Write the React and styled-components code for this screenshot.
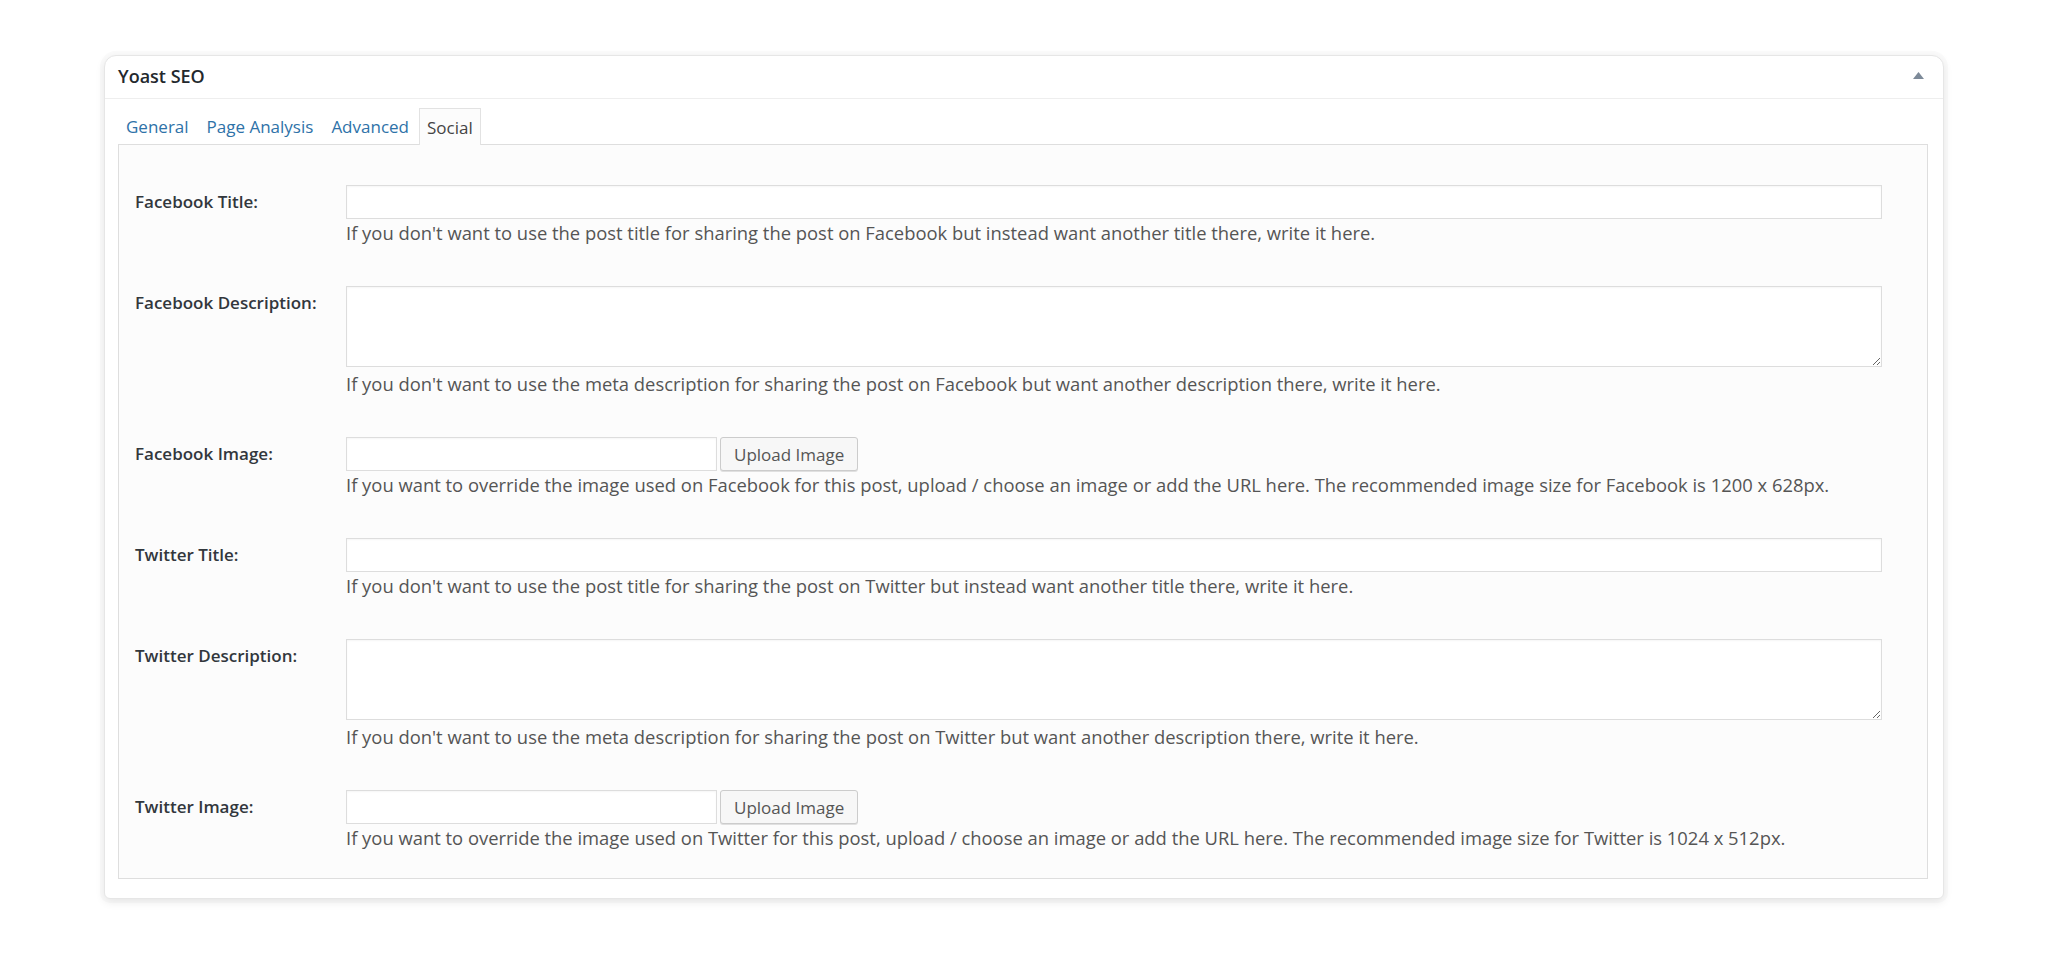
import React from "react";
import styled, { createGlobalStyle } from "styled-components";

const GlobalStyle = createGlobalStyle`
  html, body {
    margin: 0;
    padding: 0;
    background: #ffffff;
  }
  body {
    font-family: "Open Sans", "Noto Sans", sans-serif;
    color: #444;
  }
`;

const Page = styled.div`
  padding: 55px 104px 56px 104px;
  width: 1840px;
`;

const PostBox = styled.div`
  background: #fff;
  border: 1px solid #e6e6e6;
  border-radius: 12px 12px 6px 6px;
  box-shadow: 0 3px 10px rgba(0, 0, 0, 0.09), 0 0 0 4px #fbfbfb;
  overflow: hidden;
`;

const BoxHeader = styled.div`
  box-sizing: border-box;
  height: 43px;
  display: flex;
  align-items: center;
  justify-content: space-between;
  padding: 0 18px 3px 13px;
  border-bottom: 1px solid #eeeeee;
`;

const BoxTitle = styled.h2`
  margin: 0;
  font-size: 18px;
  font-weight: 600;
  color: #23282d;
`;

const Toggle = styled.button`
  border: 0;
  background: none;
  padding: 0;
  width: 14px;
  height: 14px;
  display: flex;
  align-items: center;
  justify-content: center;
  cursor: pointer;
  svg {
    display: block;
  }
`;

const Inside = styled.div`
  padding: 9px 15px 19px 13px;
`;

const TabList = styled.ul`
  list-style: none;
  margin: 0;
  padding: 0;
  display: flex;
  align-items: flex-end;
  height: 36px;
`;

const Tab = styled.li`
  margin-right: 2px;
  padding: 3px 7px 0;
  height: 33px;
  line-height: 32px;
  font-size: 17px;
  color: ${(p) => (p.$active ? "#444" : "#2e72a8")};
  background: ${(p) => (p.$active ? "#fcfcfc" : "transparent")};
  border: 1px solid ${(p) => (p.$active ? "#e2e2e2" : "transparent")};
  border-bottom: 0;
  margin-bottom: ${(p) => (p.$active ? "-1px" : "0")};
  position: relative;
  cursor: pointer;
`;

const Panel = styled.div`
  background: #fcfcfc;
  border: 1px solid #dedede;
  padding: 40px 45px 29px 16px;
`;

const Form = styled.div`
  display: grid;
  grid-template-columns: 211px 1fr;
  row-gap: 42px;
`;

const Label = styled.label`
  font-size: 17px;
  font-weight: 600;
  color: #32373c;
  line-height: 34px;
  align-self: start;
`;

const Field = styled.div`
  display: flex;
  flex-direction: column;
`;

const TextInput = styled.input`
  box-sizing: border-box;
  width: ${(p) => p.$width || "100%"};
  height: 34px;
  border: 1px solid #dddddd;
  background: #fff;
  box-shadow: inset 0 1px 2px rgba(0, 0, 0, 0.04);
  margin: 0;
  padding: 3px 6px;
  font: inherit;
  font-size: 17px;
`;

const TextArea = styled.textarea`
  box-sizing: border-box;
  display: block;
  width: 100%;
  height: 81px;
  border: 1px solid #dddddd;
  background: #fff;
  box-shadow: inset 0 1px 2px rgba(0, 0, 0, 0.04);
  margin: 0;
  padding: 4px 6px;
  font: inherit;
  font-size: 17px;
  resize: vertical;
`;

const UploadRow = styled.div`
  display: flex;
  align-items: center;
  gap: 3px;
`;

const Button = styled.button`
  box-sizing: border-box;
  height: 34px;
  padding: 0 13px;
  border: 1px solid #cccccc;
  border-radius: 3px;
  background: #f7f7f7;
  box-shadow: 0 1px 0 #e0e0e0;
  color: #555;
  font-family: "Open Sans", "Noto Sans", sans-serif;
  font-size: 17px;
  cursor: pointer;
`;

const Help = styled.p`
  margin: ${(p) => p.$gap || 3}px 0 0;
  font-size: 18.4px;
  line-height: 22px;
  color: #555;
`;

const fields = [
  {
    label: "Facebook Title:",
    kind: "text",
    help:
      "If you don't want to use the post title for sharing the post on Facebook but instead want another title there, write it here.",
  },
  {
    label: "Facebook Description:",
    kind: "area",
    help:
      "If you don't want to use the meta description for sharing the post on Facebook but want another description there, write it here.",
  },
  {
    label: "Facebook Image:",
    kind: "image",
    help:
      "If you want to override the image used on Facebook for this post, upload / choose an image or add the URL here. The recommended image size for Facebook is 1200 x 628px.",
  },
  {
    label: "Twitter Title:",
    kind: "text",
    help:
      "If you don't want to use the post title for sharing the post on Twitter but instead want another title there, write it here.",
  },
  {
    label: "Twitter Description:",
    kind: "area",
    help:
      "If you don't want to use the meta description for sharing the post on Twitter but want another description there, write it here.",
  },
  {
    label: "Twitter Image:",
    kind: "image",
    help:
      "If you want to override the image used on Twitter for this post, upload / choose an image or add the URL here. The recommended image size for Twitter is 1024 x 512px.",
  },
];

function Control({ kind }) {
  if (kind === "area") return <TextArea />;
  if (kind === "image")
    return (
      <UploadRow>
        <TextInput $width="371px" />
        <Button type="button">Upload Image</Button>
      </UploadRow>
    );
  return <TextInput />;
}

const tabs = ["General", "Page Analysis", "Advanced", "Social"];

export default function App() {
  return (
    <>
      <GlobalStyle />
      <Page>
        <PostBox>
          <BoxHeader>
            <BoxTitle>Yoast SEO</BoxTitle>
            <Toggle aria-label="Toggle panel">
              <svg width="11" height="7" viewBox="0 0 11 7">
                <path d="M5.5 0L11 7H0z" fill="#7d8a99" />
              </svg>
            </Toggle>
          </BoxHeader>
          <Inside>
            <TabList>
              {tabs.map((t) => (
                <Tab key={t} $active={t === "Social"}>
                  {t}
                </Tab>
              ))}
            </TabList>
            <Panel>
              <Form>
                {fields.map((f) => (
                  <React.Fragment key={f.label}>
                    <Label>{f.label}</Label>
                    <Field>
                      <Control kind={f.kind} />
                      <Help $gap={f.kind === "area" ? 6 : f.kind === "image" ? 0 : 3}>
                        {f.help}
                      </Help>
                    </Field>
                  </React.Fragment>
                ))}
              </Form>
            </Panel>
          </Inside>
        </PostBox>
      </Page>
    </>
  );
}
